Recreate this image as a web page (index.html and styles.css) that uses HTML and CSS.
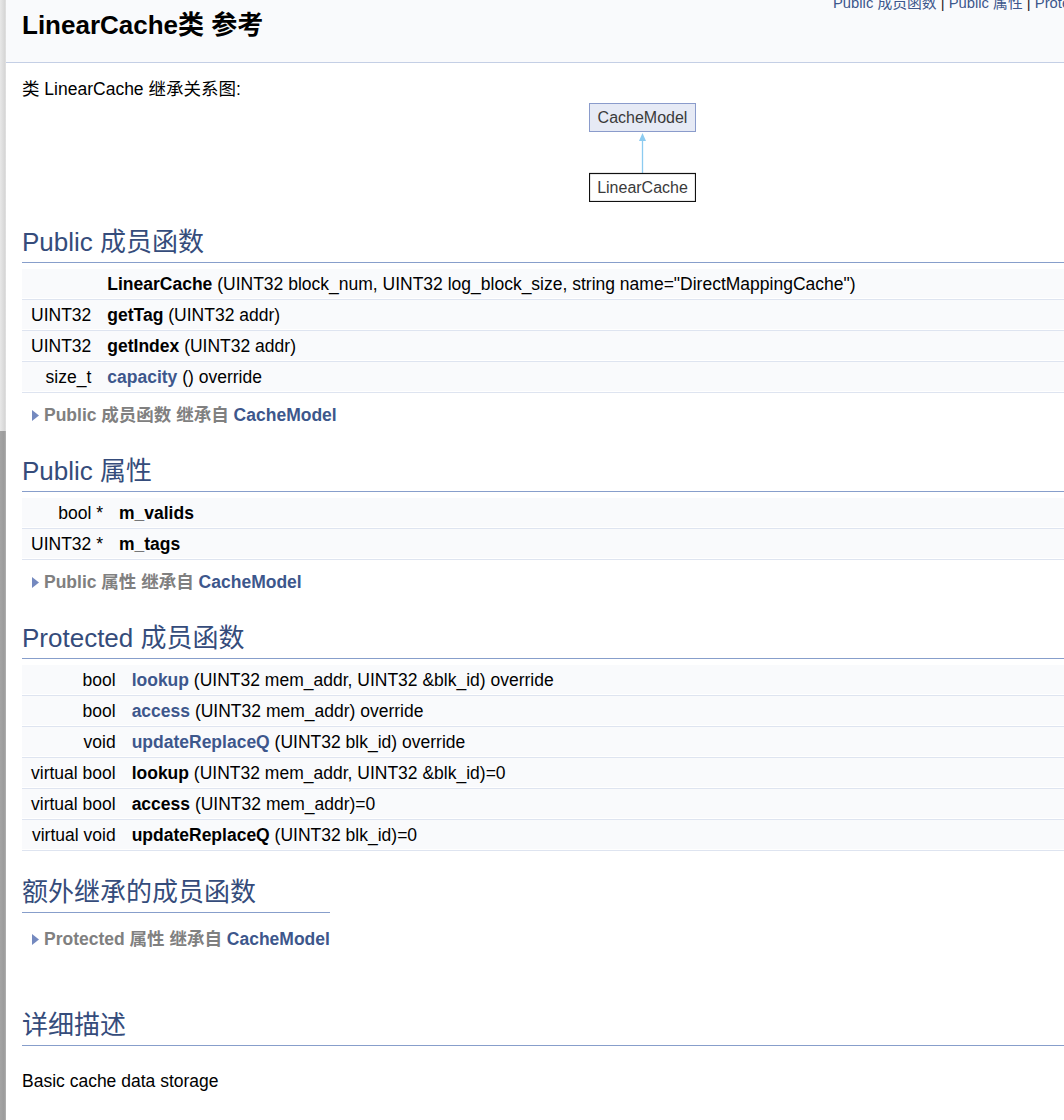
FILE: index.html
```html
<!DOCTYPE html>
<html lang="zh-CN">
<head>
<meta charset="utf-8">
<title>LinearCache类 参考</title>
<link rel="stylesheet" href="styles.css">
</head>
<body>
<div class="page">
  <div class="splitbar"><div class="split-top"></div><div class="split-thumb"></div></div>
  <div class="main">
    <div class="header">
      <div class="title">LinearCache类 参考</div>
      <div class="summary"><a href="#pub-methods">Public 成员函数</a> <span class="sep">|</span> <a href="#pub-attribs">Public 属性</a> <span class="sep">|</span> <a href="#pro-methods">Protected 成员函数</a> <span class="sep">|</span> <a href="#inherited">额外继承的成员函数</a> <span class="sep">|</span> <a href="#all">所有成员列表</a></div>
    </div>
    <div class="contents">
      <div class="dynheader">类 LinearCache 继承关系图:</div>
      <div class="center">
        <svg class="diagram" width="107" height="99" viewBox="0 0 107 99">
          <rect x="0.5" y="0.5" width="106" height="28" fill="#E6EAF5" stroke="#8A9BCB" stroke-width="1"/>
          <text x="53.5" y="19.5" text-anchor="middle" class="dtext">CacheModel</text>
          <line x1="53.5" y1="36" x2="53.5" y2="70" stroke="#8CCBF0" stroke-width="1.3"/>
          <polygon points="53.5,30 50,38 57,38" fill="#8CCBF0"/>
          <rect x="0.5" y="70.5" width="106" height="28" fill="#FFFFFF" stroke="#111111" stroke-width="1.2"/>
          <text x="53.5" y="89.5" text-anchor="middle" class="dtext">LinearCache</text>
        </svg>
      </div>

      <section class="group">
        <h2 class="groupheader first" id="pub-methods">Public 成员函数</h2>
        <table class="memberdecls">
          <tr><td class="memItemLeft"></td><td class="memItemRight"><b>LinearCache</b> (UINT32 block_num, UINT32 log_block_size, string name="DirectMappingCache")</td></tr>
          <tr><td class="memItemLeft">UINT32</td><td class="memItemRight"><b>getTag</b> (UINT32 addr)</td></tr>
          <tr><td class="memItemLeft">UINT32</td><td class="memItemRight"><b>getIndex</b> (UINT32 addr)</td></tr>
          <tr><td class="memItemLeft">size_t</td><td class="memItemRight"><a class="el" href="#capacity">capacity</a> () override</td></tr>
        </table>
        <div class="inherit"><svg class="arrow" width="7" height="11" viewBox="0 0 7 11"><polygon points="0,0 7,5.5 0,11" fill="#7489BF"/></svg><span>Public 成员函数 继承自 <a class="el" href="#CacheModel">CacheModel</a></span></div>
      </section>

      <section class="group">
        <h2 class="groupheader" id="pub-attribs">Public 属性</h2>
        <table class="memberdecls">
          <tr><td class="memItemLeft">bool *</td><td class="memItemRight"><b>m_valids</b></td></tr>
          <tr><td class="memItemLeft">UINT32 *</td><td class="memItemRight"><b>m_tags</b></td></tr>
        </table>
        <div class="inherit"><svg class="arrow" width="7" height="11" viewBox="0 0 7 11"><polygon points="0,0 7,5.5 0,11" fill="#7489BF"/></svg><span>Public 属性 继承自 <a class="el" href="#CacheModel">CacheModel</a></span></div>
      </section>

      <section class="group">
        <h2 class="groupheader" id="pro-methods">Protected 成员函数</h2>
        <table class="memberdecls">
          <tr><td class="memItemLeft">bool</td><td class="memItemRight"><a class="el" href="#lookup">lookup</a> (UINT32 mem_addr, UINT32 &amp;blk_id) override</td></tr>
          <tr><td class="memItemLeft">bool</td><td class="memItemRight"><a class="el" href="#access">access</a> (UINT32 mem_addr) override</td></tr>
          <tr><td class="memItemLeft">void</td><td class="memItemRight"><a class="el" href="#updateReplaceQ">updateReplaceQ</a> (UINT32 blk_id) override</td></tr>
          <tr><td class="memItemLeft">virtual bool</td><td class="memItemRight"><b>lookup</b> (UINT32 mem_addr, UINT32 &amp;blk_id)=0</td></tr>
          <tr><td class="memItemLeft">virtual bool</td><td class="memItemRight"><b>access</b> (UINT32 mem_addr)=0</td></tr>
          <tr><td class="memItemLeft">virtual void</td><td class="memItemRight"><b>updateReplaceQ</b> (UINT32 blk_id)=0</td></tr>
        </table>
      </section>

      <section class="group fit">
        <h2 class="groupheader after-table" id="inherited">额外继承的成员函数</h2>
        <div class="inherit after-head"><svg class="arrow" width="7" height="11" viewBox="0 0 7 11"><polygon points="0,0 7,5.5 0,11" fill="#7489BF"/></svg><span>Protected 属性 继承自 <a class="el" href="#CacheModel">CacheModel</a></span></div>
      </section>

      <section class="group">
        <h2 class="groupheader details" id="details">详细描述</h2>
        <div class="textblock">Basic cache data storage</div>
      </section>
    </div>
  </div>
</div>
</body>
</html>
```

FILE: styles.css
```css
html, body {
  margin: 0;
  padding: 0;
  overflow: hidden;
  background: #ffffff;
}

body {
  font-family: "Liberation Sans", Arial, "Noto Sans CJK SC", sans-serif;
  font-size: 17.5px;
  line-height: 22px;
  color: #000000;
}

a {
  color: #3D578C;
  text-decoration: none;
}

.page {
  display: flex;
  width: 1279px;
  min-height: 1120px;
}

.splitbar {
  width: 6px;
  flex: none;
  display: flex;
  flex-direction: column;
}

.split-top {
  height: 431px;
  background: linear-gradient(to right, #e8e8e8, #d6d6d6 80%, #e4e4e4);
}

.split-thumb {
  flex: 1;
  background: linear-gradient(to right, #a4a4a4, #9b9b9b 70%, #b4b4b4);
}

.main {
  flex: none;
  width: 1273px;
}

.header {
  background: #F9FAFC;
  border-bottom: 1px solid #C4CFE5;
  display: grid;
  grid-template-columns: 811px max-content;
  align-items: start;
  padding: 10px 0 22px 16px;
}

.title {
  font-size: 26px;
  line-height: 30px;
  font-weight: bold;
}

.summary {
  font-size: 14.8px;
  line-height: 18px;
  margin-top: -16px;
  white-space: nowrap;
}

.summary .sep {
  color: #222222;
}

.contents {
  padding: 0 16px;
}

.dynheader {
  margin-top: 15px;
}

.center {
  margin-top: 3px;
  text-align: center;
}

.diagram {
  display: block;
  margin: 0 auto;
}

.dtext {
  font-family: "Liberation Sans", Arial, sans-serif;
  font-size: 16px;
  fill: #3a3a3a;
}

.groupheader {
  margin: 18px 0 0;
  padding: 9px 0 5px;
  font-size: 26px;
  line-height: 30px;
  font-weight: normal;
  color: #354C7B;
  border-bottom: 1px solid #879ECB;
}

.groupheader.first {
  margin-top: 16px;
}

.groupheader.after-table {
  margin-top: 17px;
}

.groupheader.details {
  margin-top: 48px;
}

.group.fit {
  width: fit-content;
}

.memberdecls {
  width: 100%;
  margin-top: 6px;
  border-spacing: 0;
  border-collapse: separate;
}

.memberdecls td {
  background: #F9FAFC;
  padding-top: 4px;
  padding-bottom: 4px;
  border-bottom: 1px solid #DEE4F0;
  box-shadow: inset 0 -1px 0 #ffffff;
  line-height: 22px;
  white-space: nowrap;
  vertical-align: top;
}

.memItemLeft {
  width: 1%;
  text-align: right;
  padding-left: 9px;
  padding-right: 0;
}

.memItemRight {
  text-align: left;
  padding-left: 16px;
  padding-right: 10px;
}

.memItemRight b,
.memItemRight a.el {
  font-weight: bold;
}

.inherit {
  display: flex;
  align-items: center;
  gap: 5px;
  padding: 11px 10px 3px 10px;
  color: #808080;
  font-weight: bold;
  white-space: nowrap;
}

.inherit.after-head {
  margin-top: 4px;
  padding-right: 0;
}

.inherit .arrow {
  flex: none;
  display: block;
}

.textblock {
  margin-top: 24px;
}
```
